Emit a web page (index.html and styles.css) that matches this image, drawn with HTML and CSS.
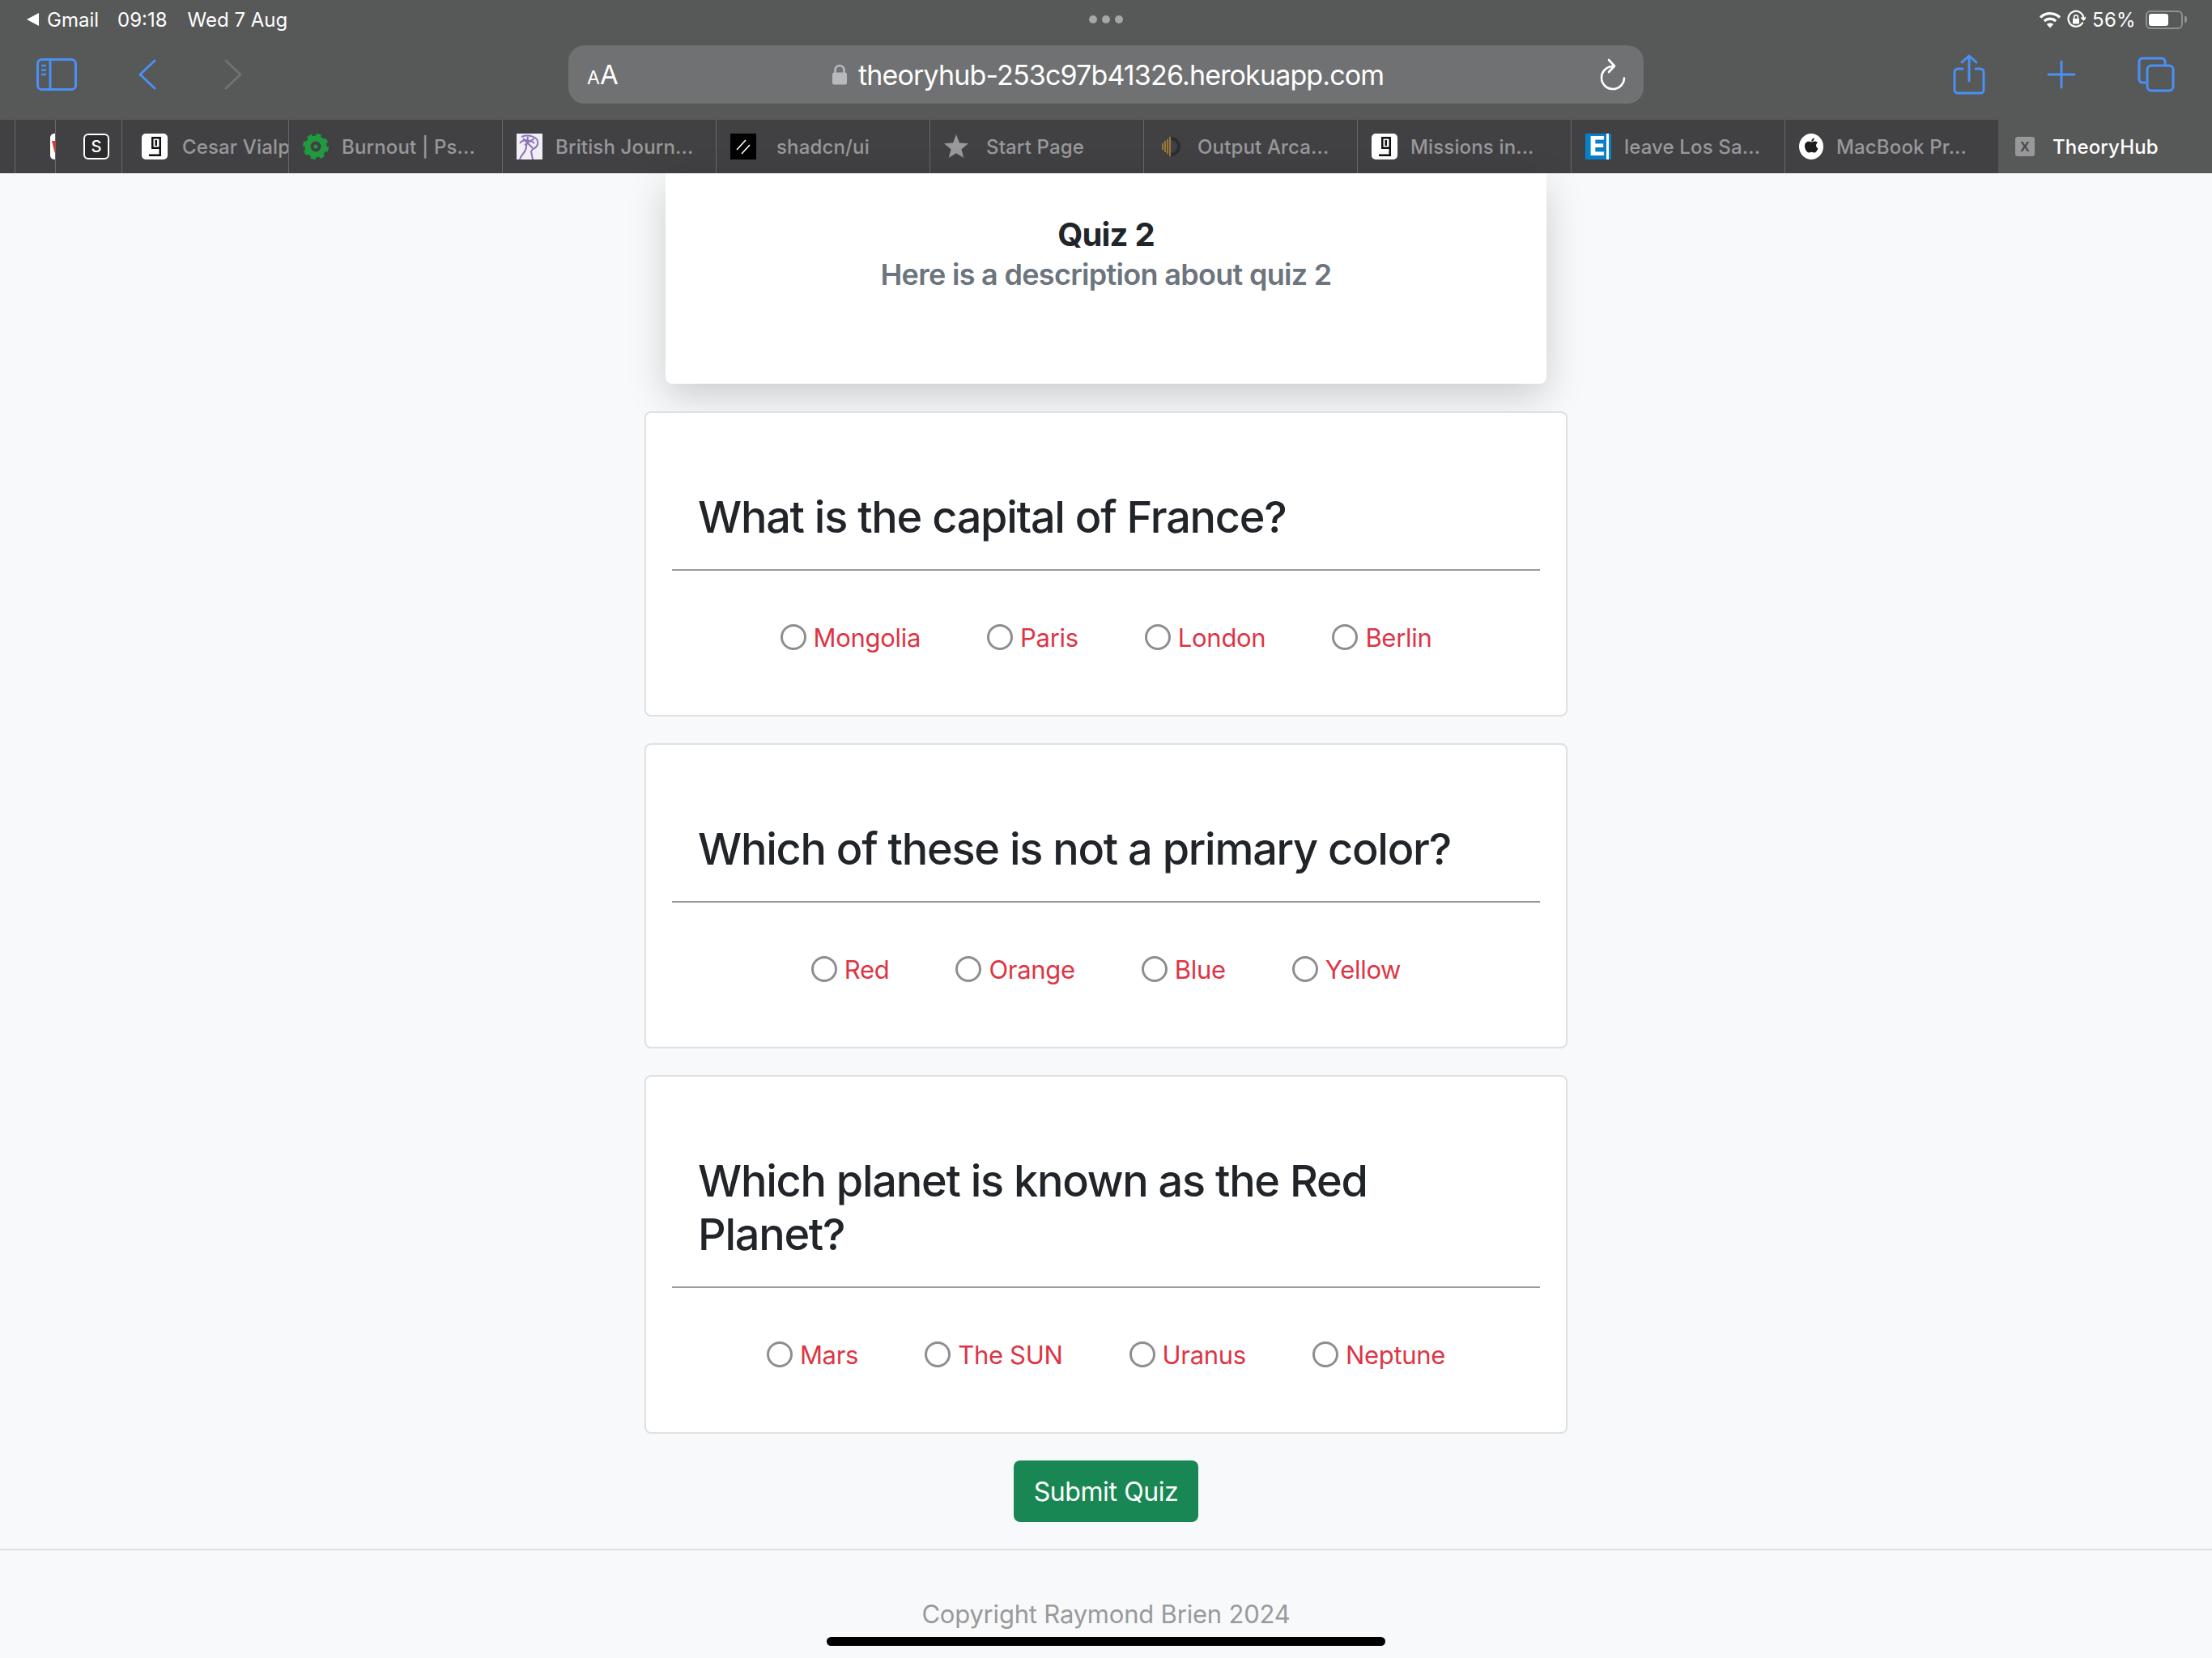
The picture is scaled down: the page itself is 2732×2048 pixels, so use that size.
FILE: index.html
```html
<!DOCTYPE html>
<html lang="en">
<head>
  <meta charset="UTF-8">
  <meta name="viewport" content="width=device-width, initial-scale=1.0">
  <title>TheoryHub</title>
  <link rel="stylesheet" href="styles.css">
</head>
<body>
  <header class="browser">
    <div class="statusbar">
      <div class="status-left">
        <svg class="back-app" width="18" height="18" viewBox="0 0 18 18"><path d="M16 1V17L1 9Z" fill="#fff"/></svg>
        <span class="status-app">Gmail</span>
        <span class="status-time">09:18</span>
        <span>Wed 7 Aug</span>
      </div>
      <div class="dots"><i></i><i></i><i></i></div>
      <div class="status-right">
        <svg width="28" height="22" viewBox="0 0 28 22" fill="none" stroke="#fff" stroke-width="3.4">
          <path d="M2 8.5C9 2 19 2 26 8.5"/>
          <path d="M6.8 13C11 9.4 17 9.4 21.2 13"/>
          <path d="M14 21.5L9.8 17C12 15 16 15 18.2 17Z" fill="#fff" stroke="none"/>
        </svg>
        <svg width="24" height="24" viewBox="0 0 24 24" fill="none" stroke="#fff" stroke-width="2.2">
          <path d="M20.5 15.5A9.5 9.5 0 1 1 21.5 11"/>
          <path d="M18.5 9.5L21.5 12.5L24 9" stroke-width="2"/>
          <rect x="8" y="11" width="8" height="6.5" rx="1" fill="#fff" stroke="none"/>
          <path d="M9.6 11V9.2A2.4 2.4 0 0 1 14.4 9.2V11" stroke-width="1.6"/>
        </svg>
        <span class="battery-pct">56%</span>
        <div class="battery"><div class="battery-fill"></div></div>
        <div class="battery-tip"></div>
      </div>
    </div>

    <div class="toolbar">
      <div class="tool-left">
        <svg width="50" height="40" viewBox="0 0 50 40" fill="none" stroke="#4a90f5" stroke-width="3">
          <rect x="1.5" y="1.5" width="47" height="37" rx="5"/>
          <path d="M17 1.5V38.5"/>
          <path d="M6 9H12M6 14.5H12M6 20H12" stroke-width="2.4"/>
        </svg>
        <svg class="chev-back" width="22" height="38" viewBox="0 0 22 38" fill="none" stroke="#4a90f5" stroke-width="3" stroke-linecap="round" stroke-linejoin="round"><path d="M20 2L2 19L20 36"/></svg>
        <svg class="chev-fwd" width="22" height="38" viewBox="0 0 22 38" fill="none" stroke="#707172" stroke-width="3" stroke-linecap="round" stroke-linejoin="round"><path d="M2 2L20 19L2 36"/></svg>
      </div>
      <div class="urlbar">
        <span class="aa"><small>A</small>A</span>
        <div class="url">
          <svg width="20" height="26" viewBox="0 0 20 26" fill="none"><path d="M4.5 11V7.5A5.5 5.5 0 0 1 15.5 7.5V11" stroke="#b8b9bd" stroke-width="2.6"/><rect x="1" y="10.5" width="18" height="15" rx="2.5" fill="#b8b9bd"/></svg>
          <span>theoryhub-253c97b41326.herokuapp.com</span>
        </div>
        <svg class="reload" width="34" height="40" viewBox="0 0 34 40" fill="none" stroke="#fff" stroke-width="2.6" stroke-linecap="round" stroke-linejoin="round">
          <path d="M17 10A14 14 0 1 0 31 24.500"/>
          <path d="M12 2L19 9.500L12 17"/>
        </svg>
      </div>
      <div class="tool-right">
        <svg width="40" height="50" viewBox="0 0 40 50" fill="none" stroke="#4a90f5" stroke-width="3" stroke-linecap="round" stroke-linejoin="round">
          <path d="M12 18H6A4 4 0 0 0 2 22V44A4 4 0 0 0 6 48H34A4 4 0 0 0 38 44V22A4 4 0 0 0 34 18H28"/>
          <path d="M20 33V2M11 10L20 2L29 10"/>
        </svg>
        <svg width="36" height="36" viewBox="0 0 36 36" fill="none" stroke="#4a90f5" stroke-width="3" stroke-linecap="round"><path d="M18 2V34M2 18H34"/></svg>
        <svg width="46" height="44" viewBox="0 0 46 44" fill="none" stroke="#4a90f5" stroke-width="3">
          <path d="M10 32H6A4 4 0 0 1 2 28V6A4 4 0 0 1 6 2H30A4 4 0 0 1 34 6V10"/>
          <rect x="12" y="11" width="32" height="31" rx="5"/>
        </svg>
      </div>
    </div>

    <nav class="tabs">
      <div class="tab tab-clip">
        <svg class="fav" width="32" height="32" viewBox="0 0 32 32"><rect width="32" height="32" rx="5" fill="#fff"/><path d="M2 9L9 9L5.500 24Z" fill="#e8392f"/></svg>
      </div>
      <div class="tab tab-icon">
        <div class="fav fav-s">S</div>
      </div>
      <div class="tab tab-cesar">
        <svg class="fav" width="32" height="32" viewBox="0 0 32 32"><rect width="32" height="32" rx="5" fill="#fff"/><path d="M9 4H24V28H9V25.500H21.500V19H12V4ZM14.500 6.500V16.500H21.500V6.500Z" fill="#111"/><path d="M16.500 8H19V15H16.500Z" fill="#111"/></svg>
        <span class="tab-title">Cesar Vialp</span>
      </div>
      <div class="tab">
        <svg class="fav" width="32" height="32" viewBox="0 0 32 32" fill="none"><circle cx="16" cy="16" r="10" stroke="#1f9a3f" stroke-width="7"/><circle cx="16" cy="16" r="14" stroke="#1f9a3f" stroke-width="4" stroke-dasharray="6 5"/><circle cx="16" cy="16" r="2.500" fill="#1f9a3f"/></svg>
        <span class="tab-title">Burnout | Ps...</span>
      </div>
      <div class="tab">
        <svg class="fav" width="32" height="32" viewBox="0 0 32 32" fill="none" stroke="#8a75b8" stroke-width="2"><rect width="32" height="32" fill="#f1eef6" stroke="none"/><path d="M6 4C14 1 28 3 26 13C25 19 20 17 18 22L20 32M4 12C8 6 18 8 22 12M8 6L20 18M14 4L12 16M22 6L10 14M4 32C6 24 12 24 12 16"/></svg>
        <span class="tab-title">British Journ...</span>
      </div>
      <div class="tab tab-shadcn">
        <svg class="fav" width="32" height="32" viewBox="0 0 32 32" fill="none" stroke="#fff" stroke-width="1.600"><rect width="32" height="32" fill="#000" stroke="none"/><path d="M8 20L19 8M14 25L24 14"/></svg>
        <span class="tab-title">shadcn/ui</span>
      </div>
      <div class="tab tab-star">
        <svg class="fav" width="30" height="30" viewBox="0 0 30 30"><path d="M15 0L19 10.500L30 11.300L21.500 18.300L24.200 29L15 23.200L5.800 29L8.500 18.300L0 11.300L11 10.500Z" fill="#98989d"/></svg>
        <span class="tab-title">Start Page</span>
      </div>
      <div class="tab tab-output">
        <svg class="fav" width="24" height="32" viewBox="0 0 24 32" fill="none"><path d="M12 6A10 10 0 0 1 12 26" stroke="#2c2d30" stroke-width="4"/><path d="M2 12V20M5 9V23M8 7V25M11 4V28" stroke="#b98a34" stroke-width="1.500"/></svg>
        <span class="tab-title">Output Arca...</span>
      </div>
      <div class="tab">
        <svg class="fav" width="32" height="32" viewBox="0 0 32 32"><rect width="32" height="32" rx="5" fill="#fff"/><path d="M9 4H24V28H9V25.500H21.500V19H12V4ZM14.500 6.500V16.500H21.500V6.500Z" fill="#111"/><path d="M16.500 8H19V15H16.500Z" fill="#111"/></svg>
        <span class="tab-title">Missions in...</span>
      </div>
      <div class="tab">
        <div class="fav fav-e">E</div>
        <span class="tab-title">leave Los Sa...</span>
      </div>
      <div class="tab">
        <svg class="fav" width="30" height="32" viewBox="0 0 30 32"><ellipse cx="15" cy="16" rx="15" ry="16" fill="#fff"/><path d="M15.300 10.500C16.800 10.500 17.800 9.600 19.500 9.600C20.800 9.600 22 10.200 22.800 11.400C20.200 13 20.700 17 23.400 18.200C22.500 20.500 21 23.500 19 23.500C17.800 23.500 17 22.700 15.500 22.700C14 22.700 13.200 23.500 12 23.500C9.500 23.500 7 18.800 7 15.500C7 12 9.200 9.800 11.600 9.800C13 9.800 14.200 10.500 15.300 10.500ZM18.800 5.500C19 7.800 17.200 9.800 15.200 9.700C15 7.600 16.800 5.700 18.800 5.500Z" fill="#1c1c1e"/></svg>
        <span class="tab-title">MacBook Pr...</span>
      </div>
      <div class="tab tab-active">
        <div class="fav fav-x">x</div>
        <span class="tab-title">TheoryHub</span>
      </div>
    </nav>
  </header>

  <main class="content">
    <section class="quiz-head">
      <h1>Quiz 2</h1>
      <p>Here is a description about quiz 2</p>
    </section>

    <form class="quiz-form">
      <div class="question">
        <h2>What is the capital of France?</h2>
        <hr>
        <div class="options">
          <label class="option"><input type="radio" name="q1">Mongolia</label>
          <label class="option"><input type="radio" name="q1">Paris</label>
          <label class="option"><input type="radio" name="q1">London</label>
          <label class="option"><input type="radio" name="q1">Berlin</label>
        </div>
      </div>

      <div class="question">
        <h2>Which of these is not a primary color?</h2>
        <hr>
        <div class="options">
          <label class="option"><input type="radio" name="q2">Red</label>
          <label class="option"><input type="radio" name="q2">Orange</label>
          <label class="option"><input type="radio" name="q2">Blue</label>
          <label class="option"><input type="radio" name="q2">Yellow</label>
        </div>
      </div>

      <div class="question">
        <h2>Which planet is known as the Red Planet?</h2>
        <hr>
        <div class="options">
          <label class="option"><input type="radio" name="q3">Mars</label>
          <label class="option"><input type="radio" name="q3">The SUN</label>
          <label class="option"><input type="radio" name="q3">Uranus</label>
          <label class="option"><input type="radio" name="q3">Neptune</label>
        </div>
      </div>

      <button type="button" class="submit">Submit Quiz</button>
    </form>
  </main>

  <footer class="footer">Copyright Raymond Brien 2024</footer>
  <div class="home-bar"></div>
</body>
</html>
```

FILE: styles.css
```css
* {
  box-sizing: border-box;
}

html, body {
  margin: 0;
  height: 2048px;
  overflow: hidden;
}

body {
  position: relative;
  background: #f8f9fa;
  font-family: Inter, "Noto Sans", sans-serif;
  color: #212529;
}

/* browser chrome */
.browser {
  background: #575858;
  color: #fff;
}

.statusbar {
  height: 48px;
  display: grid;
  grid-template-columns: 1fr auto 1fr;
  align-items: center;
  padding: 0 31px 0 32px;
  font-size: 24px;
}

.status-left {
  display: flex;
  align-items: center;
}

.back-app {
  margin-right: 8px;
}

.status-app {
  margin-right: 23px;
}

.status-time {
  margin-right: 25px;
}

.dots {
  display: flex;
  gap: 6px;
  margin-right: 2px;
}

.dots i {
  width: 10px;
  height: 10px;
  border-radius: 50%;
  background: #a5a6a6;
}

.status-right {
  display: flex;
  align-items: center;
  justify-content: flex-end;
  gap: 6px;
}

.battery-pct {
  margin: 0 6px 0 2px;
  letter-spacing: 0.3px;
}

.battery {
  width: 46px;
  height: 23px;
  border: 2px solid #8f9090;
  border-radius: 6px;
  padding: 2px;
}

.battery-fill {
  width: 24px;
  height: 100%;
  background: #fff;
  border-radius: 3px;
}

.battery-tip {
  width: 3px;
  height: 8px;
  margin-left: -4px;
  background: #8f9090;
  border-radius: 0 2px 2px 0;
}

.toolbar {
  height: 100px;
  display: flex;
  align-items: flex-start;
  padding-top: 8px;
}

.tool-left {
  width: 702px;
  height: 72px;
  display: flex;
  align-items: center;
  padding-left: 45px;
}

.chev-back {
  margin-left: 76px;
}

.chev-fwd {
  margin-left: 84px;
}

.urlbar {
  width: 1328px;
  height: 72px;
  display: flex;
  align-items: center;
  background: #707172;
  border-radius: 20px;
  padding: 0 21px 0 23px;
  position: relative;
}

.aa {
  font-size: 33px;
  width: 302px;
}

.aa small {
  font-size: 23px;
}

.url {
  flex: 1;
  display: flex;
  align-items: center;
  gap: 13px;
  font-size: 34px;
  letter-spacing: -0.85px;
}

.tool-right {
  flex: 1;
  height: 72px;
  display: flex;
  align-items: center;
  padding-left: 382px;
  gap: 76px;
}

.tabs {
  height: 66px;
  display: flex;
  background: #414143;
  padding-left: 18px;
}

.tab {
  width: 264px;
  flex: none;
  display: flex;
  align-items: center;
  gap: 16px;
  padding-left: 17px;
  border-left: 1px solid #68686a;
  overflow: hidden;
  white-space: nowrap;
  font-size: 24px;
  font-weight: 500;
  letter-spacing: 0.15px;
  color: #98989a;
}

.tab-clip {
  width: 50px;
  padding-left: 43px;
}

.tab-icon {
  width: 82px;
  padding-left: 34px;
}

.tab-cesar {
  width: 206px;
  padding-left: 24px;
  gap: 18px;
}

.tab-shadcn {
  gap: 25px;
}

.tab-star {
  gap: 22px;
}

.tab-output {
  padding-left: 21px;
  gap: 21px;
}

.tab-active {
  background: #575858;
  border-left: none;
  padding-left: 21px;
  gap: 22px;
  color: #fff;
}

.fav {
  flex: none;
}

.fav-s {
  width: 32px;
  height: 32px;
  background: #2b2b2d;
  border: 2px solid #fff;
  border-radius: 6px;
  color: #fff;
  font-size: 20px;
  line-height: 28px;
  text-align: center;
  letter-spacing: 0;
}

.fav-e {
  width: 32px;
  height: 32px;
  background: #0a7fc9;
  border-right: 3px solid #0a7fc9;
  box-shadow: inset -3px 0 0 #fff;
  color: #fff;
  font-size: 32px;
  font-weight: 800;
  line-height: 32px;
  text-align: center;
  letter-spacing: 0;
}

.fav-x {
  width: 24px;
  height: 24px;
  background: #98989a;
  border-radius: 3px;
  color: #45464a;
  font-size: 22px;
  line-height: 21px;
  text-align: center;
  letter-spacing: 0;
}

/* page */
.content {
  width: 1140px;
  margin: 0 auto;
}

.quiz-head {
  width: 1088px;
  height: 260px;
  margin: 0 auto 34px;
  padding-top: 52px;
  background: #fff;
  border-radius: 0 0 8px 8px;
  box-shadow: 0 16px 48px rgba(0, 0, 0, 0.175);
  text-align: center;
  position: relative;
}

.quiz-head h1 {
  margin: 0;
  font-size: 40px;
  font-weight: 650;
  line-height: 48px;
  letter-spacing: -0.8px;
}

.quiz-head p {
  margin: 0;
  font-size: 36px;
  font-weight: 600;
  line-height: 50px;
  letter-spacing: -0.7px;
  color: #6c757d;
}

.quiz-form {
  display: flex;
  flex-direction: column;
  gap: 33px;
  position: relative;
}

.question {
  background: #fff;
  border: 2px solid #dfe0e1;
  border-radius: 8px;
  padding: 96px 32px 0;
}

.question h2 {
  margin: 0;
  padding: 0 32px;
  font-size: 54px;
  font-weight: 500;
  line-height: 66px;
  letter-spacing: -1.25px;
}

.question hr {
  margin: 31px 0 0;
  border: none;
  border-top: 2px solid #9a9b9c;
}

.options {
  display: flex;
  justify-content: center;
  gap: 82px;
  height: 178px;
  padding-top: 57px;
}

.option {
  display: flex;
  align-items: center;
  height: 50px;
  gap: 9px;
  font-size: 31px;
  letter-spacing: -0.3px;
  color: #dc3545;
}

.option input {
  appearance: none;
  width: 32px;
  height: 32px;
  margin: 0;
  background: #fff;
  border: 3px solid #8e8e92;
  border-radius: 50%;
}

.submit {
  align-self: center;
  width: 228px;
  height: 76px;
  padding: 0;
  background: #198754;
  border: none;
  border-radius: 8px;
  color: #fff;
  font-family: inherit;
  font-size: 32px;
  letter-spacing: -0.4px;
}

.footer {
  margin-top: 33px;
  border-top: 2px solid #dfe0e1;
  padding-top: 59px;
  font-size: 31px;
  line-height: 40px;
  letter-spacing: -0.2px;
  text-align: center;
  color: #999a9b;
}

.home-bar {
  position: absolute;
  left: 1021px;
  top: 2022px;
  width: 690px;
  height: 11px;
  background: #000;
  border-radius: 6px;
}
```
